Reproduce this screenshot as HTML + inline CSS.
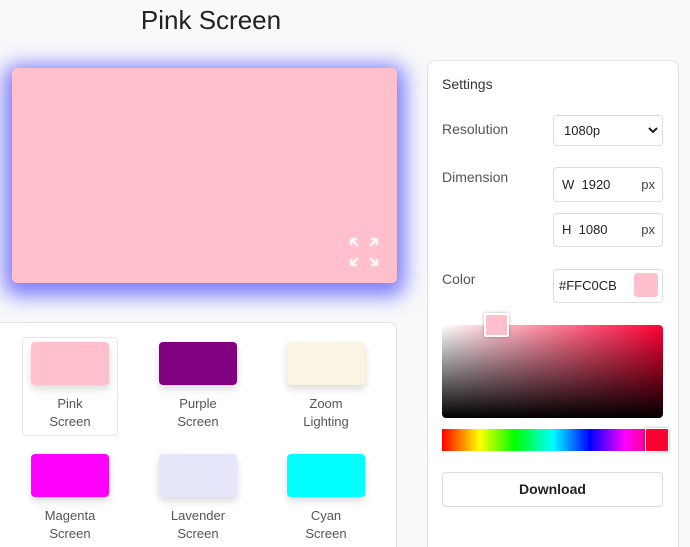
<!DOCTYPE html>
<html><head><meta charset="utf-8"><style>
*{box-sizing:border-box;margin:0;padding:0}
html,body{width:690px;height:547px;overflow:hidden}
body{background:#f9f9fa;font-family:"Liberation Sans",sans-serif;position:relative;color:#222}
.a{position:absolute}
h1{position:absolute;left:0;width:422px;top:5px;text-align:center;font-weight:400;font-size:26px;color:#222}
.prev{left:12px;top:68px;width:385px;height:215px;background:#ffc0cb;border-radius:5px;box-shadow:0 5px 20px 8px rgba(70,70,255,.7)}
.panel{background:#fff;border:1px solid #e3e3e6;border-bottom:none;border-radius:8px 8px 0 0}
.sw{width:78px;height:43px;border-radius:4px;box-shadow:0 4px 8px rgba(0,0,0,.15)}
.lb{width:110px;text-align:center;font-size:13px;line-height:18px;color:#555}
.lbl{font-size:14px;color:#555}
.inp{border:1px solid #ddd;border-radius:4px;background:#fff;font-size:13px;color:#222}
</style></head><body>
<h1>Pink Screen</h1>
<div class="a prev"></div>
<svg class="a" style="left:349px;top:237px" width="30" height="30" viewBox="0 0 30 30" fill="none" stroke="#fff" stroke-width="2.5" opacity=".9">
<path d="M2 2l7 7M2 2h6M2 2v6M28 2l-7 7M28 2h-6M28 2v6M2 28l7-7M2 28h6M2 28v-6M28 28l-7-7M28 28h-6M28 28v-6"/></svg>

<div class="a panel" style="left:-10px;top:322px;width:407px;height:225px"></div>
<div class="a" style="left:22px;top:337px;width:96px;height:99px;border:1px solid #e6e6e6;border-radius:4px"></div>
<div class="a sw" style="left:31px;top:342px;background:#ffc0cb"></div>
<div class="a sw" style="left:159px;top:342px;background:#800080"></div>
<div class="a sw" style="left:287px;top:342px;background:#faf4e3"></div>
<div class="a sw" style="left:31px;top:454px;background:#ff00ff"></div>
<div class="a sw" style="left:159px;top:454px;background:#e6e6fa"></div>
<div class="a sw" style="left:287px;top:454px;background:#00ffff"></div>
<div class="a lb" style="left:15px;top:395px">Pink<br>Screen</div>
<div class="a lb" style="left:143px;top:395px">Purple<br>Screen</div>
<div class="a lb" style="left:271px;top:395px">Zoom<br>Lighting</div>
<div class="a lb" style="left:15px;top:507px">Magenta<br>Screen</div>
<div class="a lb" style="left:143px;top:507px">Lavender<br>Screen</div>
<div class="a lb" style="left:271px;top:507px">Cyan<br>Screen</div>

<div class="a panel" style="left:427px;top:60px;width:252px;height:487px"></div>
<div class="a" style="left:442px;top:76px;font-size:14px;color:#333">Settings</div>
<div class="a lbl" style="left:442px;top:121px">Resolution</div>
<div class="a inp" style="left:553px;top:115px;width:110px;height:31px;padding:7px 0 0 10px">1080p</div>
<svg class="a" style="left:648px;top:126px" width="10" height="8" viewBox="0 0 10 8"><path d="M1 2l4 4 4-4" stroke="#222" stroke-width="2" fill="none"/></svg>
<div class="a lbl" style="left:442px;top:169px">Dimension</div>
<div class="a inp" style="left:553px;top:167px;width:110px;height:35px;padding:9px 0 0 8px">W&nbsp; 1920<span style="position:absolute;right:7px;color:#444">px</span></div>
<div class="a inp" style="left:553px;top:213px;width:110px;height:34px;padding:8px 0 0 8px">H&nbsp; 1080<span style="position:absolute;right:7px;color:#444">px</span></div>
<div class="a lbl" style="left:442px;top:271px">Color</div>
<div class="a inp" style="left:553px;top:269px;width:110px;height:34px;padding:8px 0 0 5px">#FFC0CB</div>
<div class="a" style="left:634px;top:273px;width:24px;height:24px;background:#ffc0cb;border-radius:3px"></div>
<div class="a" style="left:442px;top:325px;width:221px;height:93px;border-radius:4px;background:linear-gradient(to top,#000,rgba(0,0,0,0)),linear-gradient(to right,#fff,#ff0033)"></div>
<div class="a" style="left:484px;top:313px;width:25px;height:24px;background:#ffc0cb;border:2px solid #fff;border-radius:2px;box-shadow:0 0 3px rgba(0,0,0,.3)"></div>
<div class="a" style="left:442px;top:429px;width:221px;height:22px;background:linear-gradient(to right,#f00,#ff0 17%,#0f0 33%,#0ff 50%,#00f 67%,#f0f 83%,#f03)"></div>
<div class="a" style="left:645px;top:428px;width:24px;height:24px;background:#ff0033;border:1px solid #fff;border-radius:2px;box-shadow:0 0 3px rgba(0,0,0,.3)"></div>
<div class="a inp" style="left:442px;top:472px;width:221px;height:35px;text-align:center;line-height:33px;font-size:14px;font-weight:bold;color:#222">Download</div>
</body></html>
